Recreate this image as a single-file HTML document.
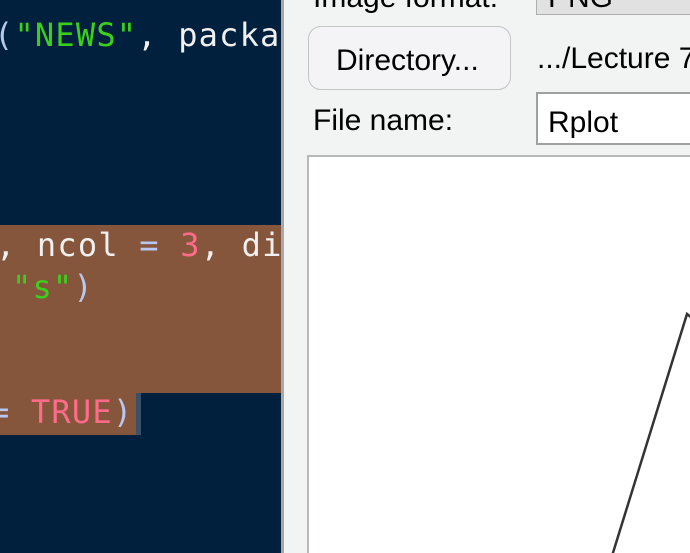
<!DOCTYPE html>
<html style="width:690px;height:553px;overflow:hidden"><head><style>
*{margin:0;padding:0;box-sizing:border-box}
body{width:690px;height:553px;overflow:hidden;position:relative;background:#f2f3f3;font-family:"Liberation Sans",sans-serif}
#ed{position:absolute;left:0;top:0;width:281px;height:553px;background:#00203d;overflow:hidden}
.sel{position:absolute;background:#85563b}
.ln{position:absolute;font-family:"DejaVu Sans Mono","Liberation Mono",monospace;font-size:32px;color:#f0f0f0;white-space:pre;line-height:42px;letter-spacing:1.2px}
.g{color:#3ccf1c}.p{color:#ff6b88}.b{color:#b8c8f0}
#bd{position:absolute;left:281px;top:0;width:3px;height:553px;background:#a8a8a8}
.t{position:absolute;font-size:30px;color:#000;white-space:nowrap}
</style></head><body>
<div id="ed">
<div class="sel" style="left:0;top:225px;width:281px;height:168px"></div>
<div class="sel" style="left:0;top:393px;width:136px;height:42px"></div>
<div style="position:absolute;left:136px;top:393px;width:5px;height:42px;background:#3a5068"></div>
<div class="ln" style="left:-6px;top:14px"><span class="b">(</span><span class="g">"NEWS"</span>, packa</div>
<div class="ln" style="left:-4px;top:224px">, ncol <span class="b">=</span> <span class="p">3</span>, di</div>
<div class="ln" style="left:12px;top:266px"><span class="g">"s"</span><span class="b">)</span></div>
<div class="ln" style="left:-10px;top:391px"><span class="b">=</span> <span class="p">TRUE</span><span class="b">)</span></div>
</div>
<div id="bd"></div>
<div class="t" style="left:313px;top:-19px">Image format:</div>
<div style="position:absolute;left:536px;top:-10px;width:160px;height:25px;background:#e1e1e1;border:1px solid #adadad"></div>
<div class="t" style="left:548px;top:-19px">PNG</div>
<div style="position:absolute;left:308px;top:26px;width:203px;height:64px;border:1.5px solid #c4c4c4;border-radius:13px;background:#f4f4f6"></div>
<div class="t" style="left:336px;top:44px">Directory...</div>
<div class="t" style="left:537px;top:42px">.../Lecture 7</div>
<div class="t" style="left:313px;top:104px">File name:</div>
<div style="position:absolute;left:536px;top:92px;width:170px;height:53px;border:2px solid #a0a0a0;background:#fff"></div>
<div class="t" style="left:548px;top:106px">Rplot</div>
<div style="position:absolute;left:307px;top:155px;width:400px;height:400px;border:2px solid #b8b8b8;border-bottom:none;background:#fff"></div>
<svg style="position:absolute;left:0;top:0" width="690" height="553"><polyline points="612,556 687,314 692,318" fill="none" stroke="#333" stroke-width="2.5"/></svg>
</body></html>
